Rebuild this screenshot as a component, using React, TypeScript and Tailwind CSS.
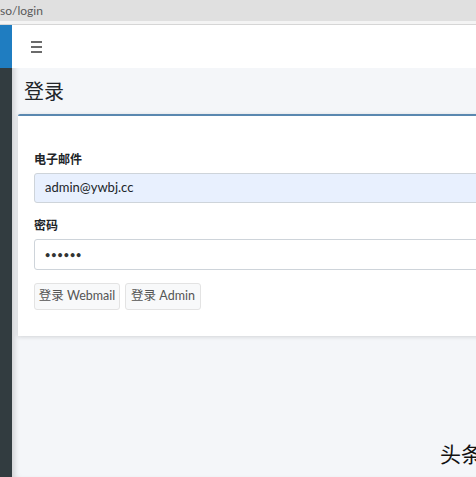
export default function App() {
  const font = { fontFamily: 'Lato, "Noto Sans CJK SC", sans-serif' };
  return (
    <div className="relative flex h-[477px] w-[476px] flex-col overflow-hidden bg-white" style={font}>
      <div className="h-[21px] shrink-0 bg-[#e0e0e0] text-[12px] leading-[21px] text-[#5a5a5a]">so/login</div>
      <div className="h-[4px] shrink-0 border-b border-[#d6d6d6] bg-[#f4f4f4]" />

      <div className="flex flex-1">
        <aside className="flex w-[12px] shrink-0 flex-col">
          <div className="h-[43px] bg-[#1f7dc1]" />
          <div className="flex-1 bg-[#323c40]" />
        </aside>

        <main className="flex w-[540px] shrink-0 flex-col bg-[#f4f6f9] shadow-[inset_6px_0_6px_-4px_rgba(0,0,0,0.18)]">
          <nav className="flex h-[43px] shrink-0 items-center bg-white pl-[19px]">
            <span className="flex w-[11px] flex-col gap-[3px]">
              <span className="h-[2px] bg-[#6b6b6b]" />
              <span className="h-[2px] bg-[#6b6b6b]" />
              <span className="h-[2px] bg-[#6b6b6b]" />
            </span>
          </nav>

          <div className="flex h-[46px] shrink-0 items-center pl-[12px] text-[20px] text-[#212529]">登录</div>

          <section className="ml-[6px] flex h-[222px] flex-col rounded-t-[2px] border-t-[2px] border-[#5a88b0] bg-white px-[16px] pt-[35px] shadow-[0_1px_4px_rgba(0,0,0,0.14)]">
            <label className="text-[12px] font-bold leading-[18px] text-[#212529]">电子邮件</label>
            <div className="mt-[4px] flex h-[30px] items-center rounded-[3px] border border-[#ced4da] bg-[#e8f0fe] px-[10px] text-[13px] text-[#212529]">
              admin@ywbj.cc
            </div>
            <label className="mt-[14px] text-[12px] font-bold leading-[18px] text-[#212529]">密码</label>
            <div className="mt-[4px] flex h-[31px] items-center rounded-[3px] border border-[#ced4da] bg-white px-[10px] text-[9px] font-bold tracking-[1px] text-[#333]">
              ••••••
            </div>
            <div className="mt-[13px] flex gap-[5px]">
              <button className="h-[27px] w-[86px] rounded-[3px] border border-[#e3e3e3] bg-[#f8f9fa] text-[12.5px] text-[#555]">登录 Webmail</button>
              <button className="h-[27px] w-[76px] rounded-[3px] border border-[#e3e3e3] bg-[#f8f9fa] text-[12.5px] text-[#555]">登录 Admin</button>
            </div>
          </section>
        </main>
      </div>

      <div
        className="absolute left-[440px] top-[440px] whitespace-nowrap text-[21px] leading-[26px] text-[#111]"
        style={{ fontFamily: '"Noto Sans CJK SC", sans-serif' }}
      >
        头条
      </div>
    </div>
  );
}
